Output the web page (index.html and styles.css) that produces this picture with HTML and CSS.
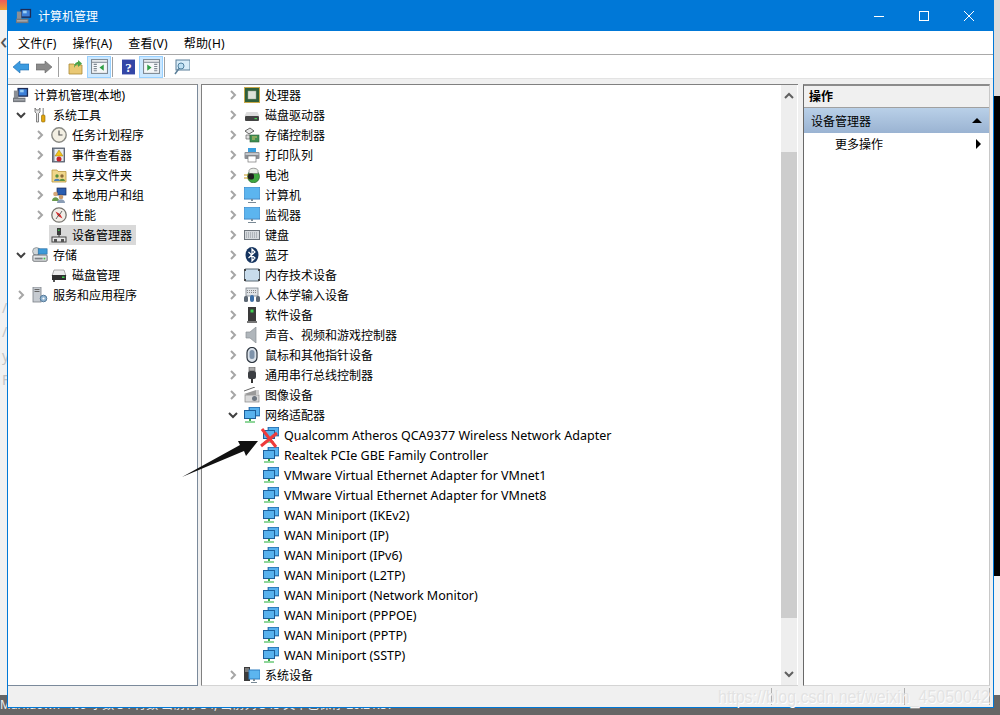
FILE: index.html
```html
<!DOCTYPE html>
<html lang="zh-CN">
<head>
  <meta charset="UTF-8" />
  <title>计算机管理</title>
  <link rel="stylesheet" href="styles.css">
</head>
<body>
  <!-- icon sheet -->
  <svg class="sprite" xmlns="http://www.w3.org/2000/svg">
    <symbol id="i-chev-r" viewBox="0 0 12 12"><path d="M4 2 8 6 4 10" fill="none" stroke="#a6a6a6" stroke-width="2"/></symbol>
    <symbol id="i-chev-d" viewBox="0 0 12 12"><path d="M2 4 6 8 10 4" fill="none" stroke="#404040" stroke-width="2"/></symbol>

    <symbol id="i-mgmt" viewBox="0 0 18 18"><rect x="5" y="1" width="12" height="10" fill="#1c2a55"/><rect x="6.5" y="2.5" width="9" height="7" fill="#3b7fd8"/><path d="M8 3h4v3H8z" fill="#9cd0f5"/><rect x="1" y="4" width="5" height="9" fill="#8b8f95"/><rect x="0" y="12" width="14" height="5" fill="#74787e"/><rect x="1" y="14" width="12" height="1" fill="#c8cbd0"/></symbol>
    <symbol id="i-tools" viewBox="0 0 16 16"><path d="M3 1v4l1.500 1.500V15h2V6.500L8 5V1L6.500 3h-2z" fill="#e4e4e4" stroke="#666" stroke-width=".8"/><rect x="10.500" y="1" width="1.500" height="7" fill="#aaa"/><rect x="9.500" y="8" width="3.500" height="7" rx="1" fill="#e2a50e" stroke="#8a6400" stroke-width=".6"/></symbol>
    <symbol id="i-clock" viewBox="0 0 16 16"><circle cx="8" cy="8" r="7.200" fill="#f3efe3" stroke="#8a8a84" stroke-width="1.400"/><path d="M8 3.500V8h3.500" fill="none" stroke="#555" stroke-width="1.200"/></symbol>
    <symbol id="i-event" viewBox="0 0 16 16"><rect x="1.500" y="1" width="12" height="14" fill="#7d8794" stroke="#4a5260" stroke-width=".8"/><rect x="3.500" y="2" width="9" height="12" fill="#e8ecf2"/><path d="M8 3 12 9H4z" fill="#f2c21b" stroke="#9a7a00" stroke-width=".5"/><circle cx="8" cy="12" r="2.500" fill="#c9252d"/></symbol>
    <symbol id="i-share" viewBox="0 0 16 16"><path d="M1 3h5l1 1.500h8V15H1z" fill="#f0d78a" stroke="#b8963e" stroke-width=".8"/><circle cx="6" cy="9" r="1.700" fill="#5a8f3c"/><path d="M3 14c0-3 6-3 6 0z" fill="#4a7fb5"/><circle cx="11" cy="9" r="1.700" fill="#8c6a3a"/><path d="M8.500 14c0-3 5.500-3 5.500 0z" fill="#5a8f3c"/></symbol>
    <symbol id="i-users" viewBox="0 0 16 16"><rect x="6" y="1" width="9" height="7" fill="#2a5db0" stroke="#1c2a55" stroke-width=".7"/><circle cx="4.500" cy="7" r="2.300" fill="#d6a878"/><path d="M1 14c0-5 7-5 7 0z" fill="#6a9a4a"/><circle cx="10" cy="10" r="2.300" fill="#c99a6b"/><path d="M6 16c0-5 8-5 8 0z" fill="#8a9db5"/></symbol>
    <symbol id="i-perf" viewBox="0 0 16 16"><circle cx="8" cy="8" r="7.200" fill="#f1eee8" stroke="#77756f" stroke-width="1.300"/><path d="M4.500 4.500 9 7l2.500 4.500L7 9z" fill="#d42a2a"/><path d="M11 4 9 7 7 9l-2 3" stroke="#444" stroke-width=".8" fill="none"/></symbol>
    <symbol id="i-devmgr" viewBox="0 0 16 16"><rect x="6" y="1" width="4" height="7" fill="#3c3c3c"/><rect x="7" y="2.500" width="1.500" height="1.500" fill="#3fc04a"/><path d="M8 8v2" stroke="#333"/><rect x="1" y="10" width="14" height="5" fill="#e6e6e6" stroke="#444"/><rect x="3" y="12" width="3" height="3" fill="#555"/><rect x="10" y="12" width="3" height="3" fill="#555"/></symbol>
    <symbol id="i-storage" viewBox="0 0 18 18"><circle cx="5" cy="5" r="4.300" fill="#cfd5d8" stroke="#8b9296"/><rect x="7" y="2" width="10" height="6" fill="#3d9ad8" stroke="#276b9e" stroke-width=".7"/><rect x="1" y="9" width="16" height="7" rx="1" fill="#e4e6e8" stroke="#5f6368"/><rect x="3" y="12" width="9" height="2" fill="#7a7f85"/><rect x="13" y="12" width="2" height="2" fill="#3fc04a"/></symbol>
    <symbol id="i-disk" viewBox="0 0 16 16"><path d="M3 3h10l2 6H1z" fill="#ececec" stroke="#8a8a8a" stroke-width=".7"/><rect x="1" y="8" width="14" height="5" fill="#2f2f2f"/><rect x="2" y="13" width="2" height="2" fill="#555"/><rect x="11" y="9.500" width="2.500" height="1.500" fill="#3fd04f"/></symbol>
    <symbol id="i-serv" viewBox="0 0 16 16"><rect x="1" y="0" width="8" height="15" fill="#c6cbd1" stroke="#7a8088" stroke-width=".8"/><path d="M2.500 2.500h5M2.500 4.500h5" stroke="#666"/><circle cx="11.500" cy="11.500" r="3.300" fill="#8fb2cf" stroke="#557a9a"/><circle cx="11.500" cy="11.500" r="1.100" fill="#fff"/></symbol>

    <symbol id="i-cpu" viewBox="0 0 16 16"><rect x="0" y="0" width="16" height="16" fill="#c9a94a"/><rect x="1" y="1" width="14" height="14" fill="#2f5f3a"/><rect x="4" y="4" width="8" height="8" fill="#dfe3da" stroke="#9aa597" stroke-width=".5"/></symbol>
    <symbol id="i-hdd" viewBox="0 0 16 16"><path d="M2.500 5h11l2 4H.5z" fill="#dcdcdc"/><rect x="1" y="9" width="14" height="5" rx="1" fill="#434343"/><rect x="10.500" y="11" width="2.500" height="1.200" fill="#3fd04f"/></symbol>
    <symbol id="i-ctl" viewBox="0 0 16 16"><path d="M1 4 6 1l4 3-5 3z" fill="#e6e6e6" stroke="#555" stroke-width=".9"/><path d="M2 8h4v4H2z" fill="#ddd" stroke="#666" stroke-width=".7"/><rect x="6" y="8" width="9" height="7" fill="#3f8f52" stroke="#2b6339" stroke-width=".6"/><path d="M8 10h5M8 12h3" stroke="#d8c36a"/></symbol>
    <symbol id="i-print" viewBox="0 0 16 16"><rect x="4" y="1" width="8" height="5" fill="#3aa0e0"/><rect x="0.500" y="5" width="15" height="7" rx="1" fill="#8c9096"/><rect x="1.500" y="6" width="13" height="2" fill="#c3c6ca"/><rect x="4" y="9" width="8" height="6" fill="#fff" stroke="#777" stroke-width=".7"/></symbol>
    <symbol id="i-batt" viewBox="0 0 16 16"><ellipse cx="9.500" cy="9.500" rx="6" ry="6.300" fill="#3ea73f" stroke="#27632a" stroke-width=".7"/><path d="M5 3.500c1-3 8-3 9 0v3H5z" fill="#e8ede6" stroke="#777" stroke-width=".7"/><path d="M0 8h5M0 11h5" stroke="#c7971f" stroke-width="1.200"/><rect x="4" y="6.500" width="6" height="6" rx="2" fill="#1f1f1f"/></symbol>
    <symbol id="i-pc" viewBox="0 0 16 16"><rect x="0" y="0" width="16" height="12" fill="#7dc4f4" stroke="#2e7fc2"/><rect x="1" y="1" width="14" height="10" fill="#5cb5ef"/><path d="M8 12v2" stroke="#7a8a96" stroke-width="2"/><path d="M4 15.500h8" stroke="#7a8a96"/></symbol>
    <symbol id="i-kbd" viewBox="0 0 16 16"><rect x="0" y="3" width="16" height="10" fill="#6f767d"/><rect x="1" y="4" width="14" height="8" fill="#d6dade"/><path d="M2 6h12M2 8h12M2 10h12" stroke="#8a9198" stroke-dasharray="1 1"/></symbol>
    <symbol id="i-bt" viewBox="0 0 16 16"><ellipse cx="8" cy="8" rx="6.500" ry="8" fill="#15345f"/><path d="M4.500 5 11 11 8 14V2l3 3-6.500 6" fill="none" stroke="#fff" stroke-width="1.200"/></symbol>
    <symbol id="i-mem" viewBox="0 0 16 16"><rect x="0.500" y="2" width="15" height="12" rx="1" fill="#c8dcec" stroke="#5d6a75"/><path d="M0 2h2v2H0zM14 2h2v2h-2zM0 12h2v2H0zM14 12h2v2h-2z" fill="#444"/></symbol>
    <symbol id="i-hid" viewBox="0 0 16 16"><rect x="2" y="1" width="12" height="8" fill="#dfe3e7" stroke="#7b828a" stroke-width=".8"/><path d="M3 3.500h10M3 5.500h10" stroke="#888" stroke-dasharray="1 1"/><rect x="0" y="9" width="4" height="6" rx="1.500" fill="#5d6874"/><rect x="12" y="9" width="4" height="6" rx="1.500" fill="#5d6874"/><rect x="6" y="8" width="4" height="7" rx="2" fill="#3c6fa8"/></symbol>
    <symbol id="i-soft" viewBox="0 0 16 16"><rect x="4" y="0" width="8" height="15" fill="#3a3a3a"/><rect x="6.500" y="2.500" width="3" height="3" fill="#3fd04f"/><rect x="3" y="14" width="10" height="2" fill="#777"/></symbol>
    <symbol id="i-snd" viewBox="0 0 16 16"><path d="M2 5h4l6-5v16l-6-5H2z" fill="#b0b6bb" stroke="#8b9095" stroke-width=".7"/></symbol>
    <symbol id="i-mouse" viewBox="0 0 16 16"><rect x="3" y="0.500" width="10" height="15" rx="5" fill="#dbe2ea" stroke="#2d3640" stroke-width="1.200"/><rect x="5.500" y="3" width="5" height="9" rx="2.500" fill="#7e93ab"/></symbol>
    <symbol id="i-usb" viewBox="0 0 16 16"><rect x="5" y="0" width="6" height="4" fill="#aaa" stroke="#555" stroke-width=".6"/><rect x="4" y="4" width="8" height="8" rx="2" fill="#3c3f43"/><rect x="7" y="12" width="2" height="4" fill="#333"/></symbol>
    <symbol id="i-img" viewBox="0 0 16 16"><path d="M0 4 11 0" stroke="#666"/><rect x="1" y="8" width="14" height="7" fill="#dadada" stroke="#888" stroke-width=".7"/><path d="M0 7 12 3v5H3z" fill="#9a9a9a"/><circle cx="10.500" cy="11.500" r="2.500" fill="#6d7680"/><rect x="12" y="3" width="3" height="5" fill="#cfcfcf"/></symbol>
    <symbol id="i-net" viewBox="0 0 16 16"><rect x="5" y="0" width="11" height="9" fill="#3c8ed0" stroke="#1d5f9b" stroke-width=".7"/><rect x="6" y="1" width="9" height="7" fill="#58b2ee"/><rect x="0.500" y="3.500" width="11" height="8" fill="#58b2ee" stroke="#1d5f9b"/><path d="M6 12v2" stroke="#39a845" stroke-width="2"/><rect x="1" y="14" width="10" height="2" fill="#8fd69a"/></symbol>
    <symbol id="i-sys" viewBox="0 0 16 16"><rect x="0" y="0" width="6" height="14" fill="#3b3b3b"/><path d="M1 2h4M1 4h4" stroke="#b9b9b9"/><rect x="5" y="3" width="11" height="9" fill="#5cb5ef" stroke="#2e7fc2"/><path d="M10 12v2" stroke="#7a8a96" stroke-width="2"/><path d="M7 15.500h6" stroke="#7a8a96"/></symbol>
  </svg>

  <!-- what shows around the window -->
  <div class="behind behind-favicon"></div>
  <div class="behind behind-arrow">&lsaquo;</div>
  <div class="behind behind-letters">/<br>/<br>y<br>F</div>
  <div class="behind behind-top"></div>
  <div class="behind behind-black"></div>
  <div class="behind behind-low"></div>
  <div class="behind behind-bar">
    <span>Markdown&nbsp; 409 字数 34 行数 当前行 34, 当前列 345 文章已保存 20:21:57</span>
  </div>

  <div class="window">
    <div class="titlebar">
      <svg class="ico-title"><use href="#i-mgmt"/></svg>
      <span class="title-text">计算机管理</span>
      <div class="caption">
        <svg class="cap-btn" viewBox="0 0 10 10"><path d="M0 5.500h10" stroke="#fff"/></svg>
        <svg class="cap-btn" viewBox="0 0 10 10"><rect x=".5" y=".5" width="9" height="9" fill="none" stroke="#fff"/></svg>
        <svg class="cap-btn" viewBox="0 0 10 10"><path d="M0 0l10 10M10 0 0 10" stroke="#fff"/></svg>
      </div>
    </div>

    <div class="menubar">
      <span>文件(F)</span>
      <span>操作(A)</span>
      <span>查看(V)</span>
      <span>帮助(H)</span>
    </div>

    <div class="toolbar">
      <svg class="tool" viewBox="0 0 16 16"><path d="M0 8 7 2v3h9v6H7v3z" fill="#3c9be0" stroke="#1d6cae" stroke-width=".6"/></svg>
      <svg class="tool" viewBox="0 0 16 16"><path d="M16 8 9 2v3H0v6h9v3z" fill="#8a8a8a" stroke="#666" stroke-width=".6"/></svg>
      <span class="tool-sep"></span>
      <svg class="tool" viewBox="0 0 16 16"><path d="M1 5h5l1 1h7v9H1z" fill="#e9c874" stroke="#a98834" stroke-width=".8"/><path d="M6 9c0-4 2-6 4-6V1l4 3.500L10 8V5.500C8 5.500 7 7 6 9z" fill="#4ba34a"/></svg>
      <span class="tool-btn"><svg viewBox="0 0 16 16"><rect x=".5" y="1.500" width="15" height="13" fill="#f4f6f8" stroke="#7d8791"/><path d="M1 4h14" stroke="#7d8791"/><path d="M2.500 6h3M2.500 8h3M2.500 10h3M2.500 12h3" stroke="#7d8791"/><path d="M12 6v6L8 9z" fill="#2f9e44"/></svg></span>
      <span class="tool-sep"></span>
      <svg class="tool tool-help" viewBox="0 0 14 16"><rect width="14" height="16" fill="#3346a6"/><text x="7" y="13" class="help-q">?</text></svg>
      <span class="tool-btn"><svg viewBox="0 0 16 16"><rect x=".5" y="1.500" width="15" height="13" fill="#f4f6f8" stroke="#7d8791"/><path d="M1 4h14" stroke="#7d8791"/><path d="M10.500 6h3M10.500 8h3M10.500 10h3M10.500 12h3" stroke="#7d8791"/><path d="M4 6v6l4-3z" fill="#2f9e44"/></svg></span>
      <span class="tool-sep"></span>
      <svg class="tool" viewBox="0 0 16 16"><rect x="2" y="1" width="14" height="10" fill="#d8ecf8" stroke="#5b7f99"/><circle cx="7" cy="7" r="3" fill="#bfe0f3" stroke="#4f7f9e"/><path d="M5 9.500 1 15" stroke="#5b7f99" stroke-width="1.500"/></svg>
    </div>

    <div class="panes">
      <div class="pane tree-pane">
        <div class="row d0"><svg class="ico"><use href="#i-mgmt"/></svg><span>计算机管理(本地)</span></div>
        <div class="row d1"><svg class="chev"><use href="#i-chev-d"/></svg><svg class="ico"><use href="#i-tools"/></svg><span>系统工具</span></div>
        <div class="row d2"><svg class="chev"><use href="#i-chev-r"/></svg><svg class="ico"><use href="#i-clock"/></svg><span>任务计划程序</span></div>
        <div class="row d2"><svg class="chev"><use href="#i-chev-r"/></svg><svg class="ico"><use href="#i-event"/></svg><span>事件查看器</span></div>
        <div class="row d2"><svg class="chev"><use href="#i-chev-r"/></svg><svg class="ico"><use href="#i-share"/></svg><span>共享文件夹</span></div>
        <div class="row d2"><svg class="chev"><use href="#i-chev-r"/></svg><svg class="ico"><use href="#i-users"/></svg><span>本地用户和组</span></div>
        <div class="row d2"><svg class="chev"><use href="#i-chev-r"/></svg><svg class="ico"><use href="#i-perf"/></svg><span>性能</span></div>
        <div class="row d2"><span class="chev"></span><span class="selected"><svg class="ico"><use href="#i-devmgr"/></svg><span>设备管理器</span></span></div>
        <div class="row d1"><svg class="chev"><use href="#i-chev-d"/></svg><svg class="ico"><use href="#i-storage"/></svg><span>存储</span></div>
        <div class="row d2"><span class="chev"></span><svg class="ico"><use href="#i-disk"/></svg><span>磁盘管理</span></div>
        <div class="row d1"><svg class="chev"><use href="#i-chev-r"/></svg><svg class="ico"><use href="#i-serv"/></svg><span>服务和应用程序</span></div>
      </div>

      <div class="pane main-pane">
        <div class="device-list">
          <div class="row m1"><svg class="chev"><use href="#i-chev-r"/></svg><svg class="ico"><use href="#i-cpu"/></svg><span>处理器</span></div>
          <div class="row m1"><svg class="chev"><use href="#i-chev-r"/></svg><svg class="ico"><use href="#i-hdd"/></svg><span>磁盘驱动器</span></div>
          <div class="row m1"><svg class="chev"><use href="#i-chev-r"/></svg><svg class="ico"><use href="#i-ctl"/></svg><span>存储控制器</span></div>
          <div class="row m1"><svg class="chev"><use href="#i-chev-r"/></svg><svg class="ico"><use href="#i-print"/></svg><span>打印队列</span></div>
          <div class="row m1"><svg class="chev"><use href="#i-chev-r"/></svg><svg class="ico"><use href="#i-batt"/></svg><span>电池</span></div>
          <div class="row m1"><svg class="chev"><use href="#i-chev-r"/></svg><svg class="ico"><use href="#i-pc"/></svg><span>计算机</span></div>
          <div class="row m1"><svg class="chev"><use href="#i-chev-r"/></svg><svg class="ico"><use href="#i-pc"/></svg><span>监视器</span></div>
          <div class="row m1"><svg class="chev"><use href="#i-chev-r"/></svg><svg class="ico"><use href="#i-kbd"/></svg><span>键盘</span></div>
          <div class="row m1"><svg class="chev"><use href="#i-chev-r"/></svg><svg class="ico"><use href="#i-bt"/></svg><span>蓝牙</span></div>
          <div class="row m1"><svg class="chev"><use href="#i-chev-r"/></svg><svg class="ico"><use href="#i-mem"/></svg><span>内存技术设备</span></div>
          <div class="row m1"><svg class="chev"><use href="#i-chev-r"/></svg><svg class="ico"><use href="#i-hid"/></svg><span>人体学输入设备</span></div>
          <div class="row m1"><svg class="chev"><use href="#i-chev-r"/></svg><svg class="ico"><use href="#i-soft"/></svg><span>软件设备</span></div>
          <div class="row m1"><svg class="chev"><use href="#i-chev-r"/></svg><svg class="ico"><use href="#i-snd"/></svg><span>声音、视频和游戏控制器</span></div>
          <div class="row m1"><svg class="chev"><use href="#i-chev-r"/></svg><svg class="ico"><use href="#i-mouse"/></svg><span>鼠标和其他指针设备</span></div>
          <div class="row m1"><svg class="chev"><use href="#i-chev-r"/></svg><svg class="ico"><use href="#i-usb"/></svg><span>通用串行总线控制器</span></div>
          <div class="row m1"><svg class="chev"><use href="#i-chev-r"/></svg><svg class="ico"><use href="#i-img"/></svg><span>图像设备</span></div>
          <div class="row m1"><svg class="chev"><use href="#i-chev-d"/></svg><svg class="ico"><use href="#i-net"/></svg><span>网络适配器</span></div>
          <div class="row m2"><span class="chev"></span><svg class="ico"><use href="#i-net"/></svg><span>Qualcomm Atheros QCA9377 Wireless Network Adapter</span></div>
          <div class="row m2"><span class="chev"></span><svg class="ico"><use href="#i-net"/></svg><span>Realtek PCIe GBE Family Controller</span></div>
          <div class="row m2"><span class="chev"></span><svg class="ico"><use href="#i-net"/></svg><span>VMware Virtual Ethernet Adapter for VMnet1</span></div>
          <div class="row m2"><span class="chev"></span><svg class="ico"><use href="#i-net"/></svg><span>VMware Virtual Ethernet Adapter for VMnet8</span></div>
          <div class="row m2"><span class="chev"></span><svg class="ico"><use href="#i-net"/></svg><span>WAN Miniport (IKEv2)</span></div>
          <div class="row m2"><span class="chev"></span><svg class="ico"><use href="#i-net"/></svg><span>WAN Miniport (IP)</span></div>
          <div class="row m2"><span class="chev"></span><svg class="ico"><use href="#i-net"/></svg><span>WAN Miniport (IPv6)</span></div>
          <div class="row m2"><span class="chev"></span><svg class="ico"><use href="#i-net"/></svg><span>WAN Miniport (L2TP)</span></div>
          <div class="row m2"><span class="chev"></span><svg class="ico"><use href="#i-net"/></svg><span>WAN Miniport (Network Monitor)</span></div>
          <div class="row m2"><span class="chev"></span><svg class="ico"><use href="#i-net"/></svg><span>WAN Miniport (PPPOE)</span></div>
          <div class="row m2"><span class="chev"></span><svg class="ico"><use href="#i-net"/></svg><span>WAN Miniport (PPTP)</span></div>
          <div class="row m2"><span class="chev"></span><svg class="ico"><use href="#i-net"/></svg><span>WAN Miniport (SSTP)</span></div>
          <div class="row m1"><svg class="chev"><use href="#i-chev-r"/></svg><svg class="ico"><use href="#i-sys"/></svg><span>系统设备</span></div>
        </div>
        <div class="scrollbar">
          <svg class="scroll-arrow" viewBox="0 0 12 12"><path d="M2 8 6 4l4 4" fill="none" stroke="#606060" stroke-width="2"/></svg>
          <div class="scroll-thumb"></div>
          <svg class="scroll-arrow" viewBox="0 0 12 12"><path d="M2 4l4 4 4-4" fill="none" stroke="#606060" stroke-width="2"/></svg>
        </div>
      </div>

      <div class="pane action-pane">
        <div class="action-head">操作</div>
        <div class="action-group"><span>设备管理器</span><i class="tri-up"></i></div>
        <div class="action-item"><span>更多操作</span><i class="tri-right"></i></div>
      </div>
    </div>

    <div class="statusbar">
      <span class="status-cell main"></span>
      <span class="status-cell mid"></span>
      <span class="status-cell last"></span>
    </div>
  </div>

  <!-- hand drawn annotation on top of the screenshot -->
  <svg class="markup" viewBox="0 0 1000 715">
    <path d="M182 477 240 445 238 441 258 441 246 456 244 451z" fill="#111"/>
    <path d="M262 429 276 447M277 433 261 446" stroke="#ee3b3b" stroke-width="3" fill="none"/>
    <circle cx="296" cy="440" r="1" fill="#e33"/>
    <circle cx="293" cy="457" r="1" fill="#e33"/>
  </svg>

  <div class="watermark">https://blog.csdn.net/weixin_45050042</div>
</body>
</html>
```

FILE: styles.css
```css
html,
body {
  margin: 0;
  height: 100%;
}

body {
  position: relative;
  width: 1000px;
  height: 715px;
  overflow: hidden;
  background-color: #f1f1f1;
  color: #000;
  font-family: "Noto Sans", "Noto Sans CJK SC", sans-serif;
  font-size: 12px;
}

.sprite {
  position: absolute;
  width: 0;
  height: 0;
}

/* desktop behind the window */
.behind {
  position: absolute;
}

.behind-favicon {
  left: 0;
  top: 0;
  width: 7px;
  height: 10px;
  background: linear-gradient(#f05a5a, #f0a030);
}

.behind-arrow {
  left: 0;
  top: 26px;
  color: #555;
  font-size: 24px;
  line-height: 28px;
}

.behind-letters {
  left: 2px;
  top: 296px;
  color: #c4c4c4;
  font-size: 14px;
  line-height: 24px;
}

.behind-top {
  left: 994px;
  top: 0;
  width: 6px;
  height: 96px;
  background-color: #dcdcdc;
}

.behind-black {
  left: 994px;
  top: 96px;
  width: 6px;
  height: 480px;
  background-color: #000;
}

.behind-low {
  left: 994px;
  top: 576px;
  width: 6px;
  height: 120px;
  background-color: #f4f4f4;
}

.behind-bar {
  left: 0;
  top: 695px;
  width: 1000px;
  height: 20px;
  background-color: #666;
  color: #eee;
  line-height: 20px;
  white-space: nowrap;
}

/* window frame */
.window {
  position: absolute;
  left: 7px;
  top: 0;
  width: 985px;
  height: 707px;
  border: 1px solid #0078d7;
  border-top: 0;
  display: flex;
  flex-direction: column;
  background-color: #f0f0f0;
}

.titlebar {
  height: 31px;
  flex: none;
  background-color: #0078d7;
  color: #fff;
  display: flex;
  align-items: center;
  padding-left: 8px;
}

.ico-title {
  width: 16px;
  height: 16px;
}

.title-text {
  margin-left: 6px;
}

.caption {
  margin-left: auto;
  display: flex;
  align-items: center;
  gap: 35px;
  padding-right: 19px;
}

.cap-btn {
  width: 10px;
  height: 10px;
}

.menubar {
  height: 23px;
  flex: none;
  background-color: #fff;
  border-bottom: 1px solid #a9a9a9;
  display: flex;
  align-items: center;
  gap: 16px;
  padding-left: 10px;
  letter-spacing: .2px;
}

.toolbar {
  height: 23px;
  flex: none;
  background-color: #fff;
  display: flex;
  align-items: center;
  padding-left: 5px;
}

.tool {
  width: 16px;
  height: 16px;
  margin-right: 7px;
  flex: none;
}

.tool-sep {
  width: 1px;
  height: 20px;
  background-color: #a0a0a0;
  margin: 0 9px 0 -1px;
  flex: none;
}

.tool-btn {
  width: 22px;
  height: 20px;
  background-color: #cce8ff;
  border: 1px solid #99d1ff;
  display: flex;
  align-items: center;
  justify-content: center;
  margin: 0 2px 0 -4px;
  flex: none;
}

.tool-btn svg {
  width: 17px;
  height: 17px;
}

.tool-help {
  width: 13px;
  margin-right: 8px;
}

.help-q {
  fill: #fff;
  font-family: "Liberation Serif", serif;
  font-size: 14px;
  font-weight: bold;
  text-anchor: middle;
}

.panes {
  flex: none;
  display: flex;
  padding-top: 5px;
  background-color: #f0f0f0;
  border-top: 1px solid #e3e3e3;
}

.pane {
  background-color: #fff;
  overflow: hidden;
  height: 600px;
}

.tree-pane {
  width: 189px;
  border-right: 1px solid #7b8a9b;
  border-bottom: 1px solid #7b8a9b;
  border-top: 1px solid #8b8b8b;
}

.main-pane {
  width: 596px;
  margin-left: 3px;
  border-left: 1px solid #808080;
  border-top: 1px solid #808080;
  border-bottom: 1px solid #d4d4d4;
  display: flex;
}

.device-list {
  flex: 1;
}

.action-pane {
  width: 185px;
  height: 599px;
  margin-left: 5px;
  border-left: 1px solid #696969;
  border-right: 1px solid #c8c8c8;
  border-top: 2px solid #8b8b8b;
  border-bottom: 1px solid #d4d4d4;
}

/* tree rows */
.row {
  height: 20px;
  display: flex;
  align-items: center;
  white-space: nowrap;
}

.chev {
  width: 12px;
  height: 12px;
  flex: none;
  margin-right: 5px;
}

.ico {
  width: 16px;
  height: 16px;
  flex: none;
  margin-right: 5px;
}

.d0 { padding-left: 5px; }
.d1 { padding-left: 7px; }
.d2 { padding-left: 26px; }
.m1 { padding-left: 25px; }
.m2 { padding-left: 44px; font-size: 12.5px; }

.selected {
  display: flex;
  align-items: center;
  height: 20px;
  background-color: #d9d9d9;
  margin-left: -2px;
  padding: 0 4px 0 2px;
}

/* scrollbar */
.scrollbar {
  width: 16px;
  margin-right: 1px;
  background-color: #eee;
  display: flex;
  flex-direction: column;
  align-items: center;
  flex: none;
}

.scroll-arrow {
  width: 12px;
  height: 12px;
  flex: none;
  margin: 5px 0;
}

.scroll-thumb {
  width: 100%;
  height: 466px;
  margin-top: 45px;
  margin-bottom: 45px;
  background-color: #cdcdcd;
  flex: none;
}

/* action pane */
.action-head {
  height: 21px;
  line-height: 21px;
  padding-left: 5px;
  background-color: #f0f0f0;
  border-bottom: 1px solid #a0a0a0;
  font-weight: bold;
}

.action-group {
  height: 25px;
  display: flex;
  align-items: center;
  justify-content: space-between;
  padding: 0 7px;
  background: linear-gradient(#b9d0e8, #9ab3d2);
}

.action-item {
  height: 22px;
  display: flex;
  align-items: center;
  justify-content: space-between;
  padding: 0 8px 0 31px;
}

.tri-up {
  border: 5px solid transparent;
  border-top: 0;
  border-bottom: 5px solid #000;
}

.tri-right {
  border: 5px solid transparent;
  border-right: 0;
  border-left: 5px solid #000;
}

/* status bar */
.statusbar {
  flex: 1;
  display: flex;
  padding: 2px 3px 2px 0;
  background-color: #f0f0f0;
}

.status-cell {
  border-right: 1px solid #b0b0b0;
}

.status-cell.main {
  flex: 1;
}

.status-cell.mid {
  width: 132px;
}

.status-cell.last {
  width: 84px;
}

.markup {
  position: absolute;
  left: 0;
  top: 0;
  width: 1000px;
  height: 715px;
  pointer-events: none;
}

.watermark {
  position: absolute;
  left: 718px;
  top: 685px;
  font-family: "Liberation Sans", sans-serif;
  font-size: 19px;
  line-height: 24px;
  color: #e3e3e3;
  text-shadow: 1px 1px 0 #fff;
  white-space: nowrap;
  transform: scaleX(.84);
  transform-origin: left top;
}
```
